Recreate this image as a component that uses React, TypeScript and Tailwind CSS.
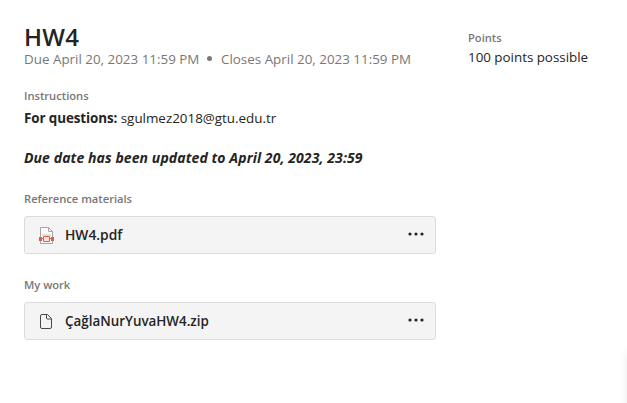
import React from "react";

function Dots() {
  return (
    <svg className="relative -top-px" width="16" height="4" viewBox="0 0 16 4" fill="#242424">
      <circle cx="2" cy="2" r="1.6" />
      <circle cx="8" cy="2" r="1.6" />
      <circle cx="14" cy="2" r="1.6" />
    </svg>
  );
}

function PdfIcon() {
  return (
    <svg width="17" height="18" viewBox="0 0 17 18" fill="none">
      <path d="M2.500 1.500h8l4 4v12h-12z" fill="#fafafa" stroke="#a6a6a6" />
      <path d="M10.500 1.500v4h4" stroke="#a6a6a6" />
      <path d="M4 8h9v2h-9z" fill="#dfdfdf" />
      <path d="M1 11h3v4h-3zM13 11h3v4h-3z" fill="#dc6047" />
      <path d="M5.500 10.500h6v5h-6z" fill="#f6e5e1" stroke="#dc6047" />
      <path d="M4 12.500h1M12 12.500h1" stroke="#dc6047" />
    </svg>
  );
}

function FileIcon() {
  return (
    <svg width="17" height="18" viewBox="0 0 17 18" fill="none" stroke="#484848">
      <path d="M4 2.500h5.500l4 4v8.500a1.500 1.500 0 0 1-1.500 1.500h-8a1.500 1.500 0 0 1-1.500-1.500v-11a1.500 1.500 0 0 1 1.500-1.500z" />
      <path d="M8.500 2.500v3.500a1 1 0 0 0 1 1h4" />
    </svg>
  );
}

function FileRow({ name, icon, size }: { name: string; icon: React.ReactNode; size: string }) {
  return (
    <div className="flex h-[38px] w-[412px] items-center rounded-[3px] border border-[#dcdcde] bg-[#f4f4f4] pl-[13px] pr-[11px]">
      {icon}
      <span className={`ml-[10px] flex-1 font-semibold leading-5 ${size}`}>{name}</span>
      <Dots />
    </div>
  );
}

const label = "text-[11.2px] font-semibold leading-4 tracking-[-0.02px] text-[#797775]";

export default function App() {
  return (
    <main className="relative flex h-[403px] w-[627px] overflow-hidden bg-white pl-6 font-['Open_Sans',sans-serif] text-[#242424]">
      <section className="w-[444px] pt-6">
        <h1 className="text-[24px] font-semibold leading-[26px] tracking-[0.25px]">HW4</h1>
        <div className="-mt-px flex text-[13.4px] leading-5 text-[#797775]">
          <span className="w-[197px]">Due April 20, 2023 11:59 PM<span className="ml-[8px] inline-block h-[5px] w-[5px] rounded-full bg-[#797775] align-[3px]" /></span>
          <span>Closes April 20, 2023 11:59 PM</span>
        </div>
        <h2 className={`${label} mt-[19px]`}>Instructions</h2>
        <p className="mt-1 text-[13.4px] leading-5"><b className="tracking-[-0.09px]">For questions:</b> sgulmez2018@gtu.edu.tr</p>
        <p className="mt-5 text-[14px] font-bold italic leading-5 tracking-[0.09px]">Due date has been updated to April 20, 2023, 23:59</p>
        <h2 className={`${label} mb-[9px] mt-[23px]`}>Reference materials</h2>
        <FileRow name="HW4.pdf" icon={<PdfIcon />} size="text-[13.8px]" />
        <h2 className={`${label} mb-[9px] mt-[23px]`}>My work</h2>
        <FileRow name="ÇağlaNurYuvaHW4.zip" icon={<FileIcon />} size="text-[13.4px]" />
      </section>
      <aside className="pt-[30px]">
        <h2 className={label}>Points</h2>
        <p className="mt-px text-[13.4px] leading-5 tracking-[-0.02px]">100 points possible</p>
      </aside>
      <div className="absolute left-[627px] top-[352px] h-[80px] w-[20px] shadow-[0_0_8px_rgba(0,0,0,0.09)]" />
    </main>
  );
}
